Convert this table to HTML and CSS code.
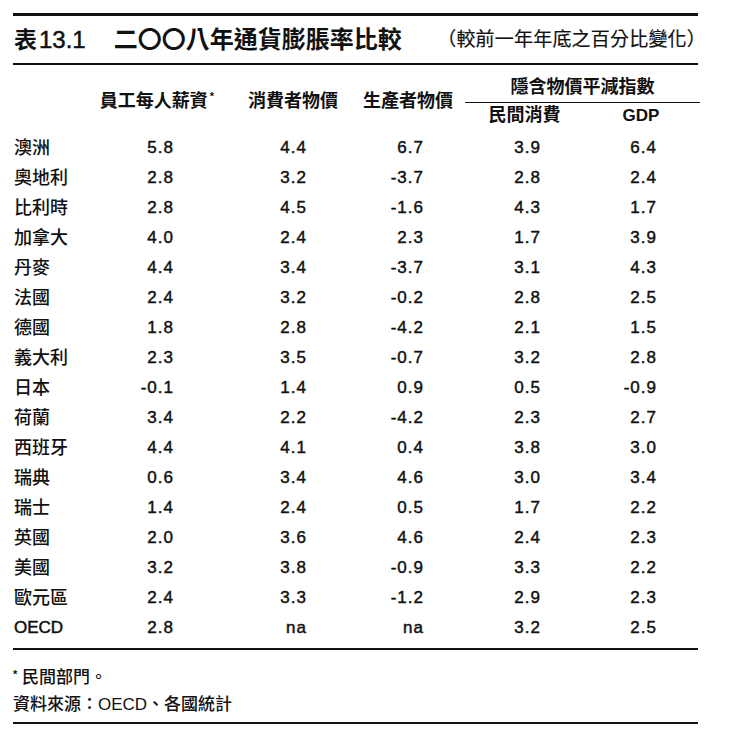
FILE: index.html
```html
<!DOCTYPE html>
<html lang="zh-Hant">
<head>
<meta charset="utf-8">
<title>表13.1 二〇〇八年通貨膨脹率比較</title>
<link rel="stylesheet" href="styles.css">
</head>
<body>
<div class="page">
  <div class="titlebar">
    <span class="tno">表<span class="tnum">13.1</span></span>
    <span class="tmain">二〇〇八年通貨膨脹率比較</span>
    <span class="tsub">（較前一年年底之百分比變化）</span>
  </div>

  <div class="thead">
    <div class="h-sp h-c1">員工每人薪資<span class="ast">*</span></div>
    <div class="h-sp h-c2">消費者物價</div>
    <div class="h-sp h-c3">生產者物價</div>
    <div class="h-grp">隱含物價平減指數</div>
    <div class="h-sub h-c4">民間消費</div>
    <div class="h-sub h-c5"><span class="lat">GDP</span></div>
  </div>

  <div class="tbody">
    <div class="row"><div class="lbl">澳洲</div><div class="n">5.8</div><div class="n">4.4</div><div class="n">6.7</div><div class="n">3.9</div><div class="n">6.4</div></div>
    <div class="row"><div class="lbl">奧地利</div><div class="n">2.8</div><div class="n">3.2</div><div class="n">-3.7</div><div class="n">2.8</div><div class="n">2.4</div></div>
    <div class="row"><div class="lbl">比利時</div><div class="n">2.8</div><div class="n">4.5</div><div class="n">-1.6</div><div class="n">4.3</div><div class="n">1.7</div></div>
    <div class="row"><div class="lbl">加拿大</div><div class="n">4.0</div><div class="n">2.4</div><div class="n">2.3</div><div class="n">1.7</div><div class="n">3.9</div></div>
    <div class="row"><div class="lbl">丹麥</div><div class="n">4.4</div><div class="n">3.4</div><div class="n">-3.7</div><div class="n">3.1</div><div class="n">4.3</div></div>
    <div class="row"><div class="lbl">法國</div><div class="n">2.4</div><div class="n">3.2</div><div class="n">-0.2</div><div class="n">2.8</div><div class="n">2.5</div></div>
    <div class="row"><div class="lbl">德國</div><div class="n">1.8</div><div class="n">2.8</div><div class="n">-4.2</div><div class="n">2.1</div><div class="n">1.5</div></div>
    <div class="row"><div class="lbl">義大利</div><div class="n">2.3</div><div class="n">3.5</div><div class="n">-0.7</div><div class="n">3.2</div><div class="n">2.8</div></div>
    <div class="row"><div class="lbl">日本</div><div class="n">-0.1</div><div class="n">1.4</div><div class="n">0.9</div><div class="n">0.5</div><div class="n">-0.9</div></div>
    <div class="row"><div class="lbl">荷蘭</div><div class="n">3.4</div><div class="n">2.2</div><div class="n">-4.2</div><div class="n">2.3</div><div class="n">2.7</div></div>
    <div class="row"><div class="lbl">西班牙</div><div class="n">4.4</div><div class="n">4.1</div><div class="n">0.4</div><div class="n">3.8</div><div class="n">3.0</div></div>
    <div class="row"><div class="lbl">瑞典</div><div class="n">0.6</div><div class="n">3.4</div><div class="n">4.6</div><div class="n">3.0</div><div class="n">3.4</div></div>
    <div class="row"><div class="lbl">瑞士</div><div class="n">1.4</div><div class="n">2.4</div><div class="n">0.5</div><div class="n">1.7</div><div class="n">2.2</div></div>
    <div class="row"><div class="lbl">英國</div><div class="n">2.0</div><div class="n">3.6</div><div class="n">4.6</div><div class="n">2.4</div><div class="n">2.3</div></div>
    <div class="row"><div class="lbl">美國</div><div class="n">3.2</div><div class="n">3.8</div><div class="n">-0.9</div><div class="n">3.3</div><div class="n">2.2</div></div>
    <div class="row"><div class="lbl">歐元區</div><div class="n">2.4</div><div class="n">3.3</div><div class="n">-1.2</div><div class="n">2.9</div><div class="n">2.3</div></div>
    <div class="row"><div class="lbl lat">OECD</div><div class="n">2.8</div><div class="n">na</div><div class="n">na</div><div class="n">3.2</div><div class="n">2.5</div></div>
  </div>

  <div class="notes">
    <div class="note"><span class="ast-n">*</span> 民間部門。</div>
    <div class="note">資料來源：OECD、各國統計</div>
  </div>
</div>
</body>
</html>
```

FILE: styles.css
```css
html, body {
  margin: 0;
  padding: 0;
  background: #ffffff;
}

body {
  font-family: "Liberation Sans", "Noto Sans CJK TC", sans-serif;
  color: #111111;
}

.page {
  --cols: 77px 138px 130px 107px 119px 114px;
  width: 685px;
  margin: 13px 0 0 13px;
}

/* ---------- title bar ---------- */
.titlebar {
  display: flex;
  align-items: center;
  height: 47px;
  border-top: 3px solid #111;
  border-bottom: 2px solid #111;
}

.tno {
  font-size: 23px;
  font-weight: 700;
  padding-left: 1px;
  line-height: 30px;
}

.tnum {
  margin-left: 2px;
  font-size: 24px;
  font-weight: 400;
  -webkit-text-stroke: 0.5px #111;
}

.tmain {
  margin-left: 28px;
  font-size: 24px;
  font-weight: 700;
  line-height: 30px;
}

.tsub {
  margin-left: auto;
  margin-right: -8px;
  font-size: 19px;
  font-weight: 400;
  line-height: 30px;
  letter-spacing: 0.2px;
  -webkit-text-stroke: 0.2px #111;
}

/* ---------- header ---------- */
.thead {
  display: grid;
  grid-template-columns: var(--cols);
  grid-template-rows: 38px 25.5px;
  margin-bottom: 4px;
  font-size: 18px;
  font-weight: 700;
}

.h-sp {
  grid-row: 1 / 3;
  display: flex;
  align-items: center;
  justify-content: center;
  padding-top: 8px;
  line-height: 24px;
}

.h-c1 { grid-column: 2; padding-right: 4px; }
.h-c2 { grid-column: 3; }
.h-c3 { grid-column: 4; padding-right: 7px; }

.h-grp {
  grid-column: 5 / 7;
  grid-row: 1;
  display: flex;
  align-items: flex-end;
  justify-content: center;
  padding-bottom: 3px;
  line-height: 24px;
  border-bottom: 1.5px solid #111;
  margin-right: -2px;
}

.h-sub {
  grid-row: 2;
  text-align: center;
  line-height: 25.5px;
}

.h-c4 { grid-column: 5; }
.h-c5 { grid-column: 6; }

.lat {
  font-size: 17px;
}

.ast {
  position: relative;
  top: -5px;
  margin-left: 2px;
  font-size: 11px;
  font-weight: 700;
}

/* ---------- body ---------- */
.row {
  display: grid;
  grid-template-columns: var(--cols);
  height: 30px;
  line-height: 30px;
}

.lbl {
  font-size: 18px;
  font-weight: 500;
  padding-left: 1px;
  white-space: nowrap;
}

.lbl.lat {
  font-size: 17px;
  font-weight: 400;
  -webkit-text-stroke: 0.5px #111;
}

.n {
  font-size: 17px;
  letter-spacing: 1px;
  text-align: right;
  -webkit-text-stroke: 0.45px #111;
}

.row .n:nth-child(2) { padding-right: 54px; }
.row .n:nth-child(3) { padding-right: 51px; }
.row .n:nth-child(4) { padding-right: 41px; }
.row .n:nth-child(5) { padding-right: 43px; }
.row .n:nth-child(6) { padding-right: 41px; }

/* ---------- notes ---------- */
.notes {
  margin-top: 5.5px;
  border-top: 2px solid #111;
  border-bottom: 2.5px solid #111;
  padding: 14.5px 0 5.5px 0;
}

.note {
  font-size: 17px;
  line-height: 25px;
  font-weight: 500;
  white-space: nowrap;
}

.ast-n {
  position: relative;
  top: -5px;
  font-size: 11px;
  font-weight: 700;
}
```
